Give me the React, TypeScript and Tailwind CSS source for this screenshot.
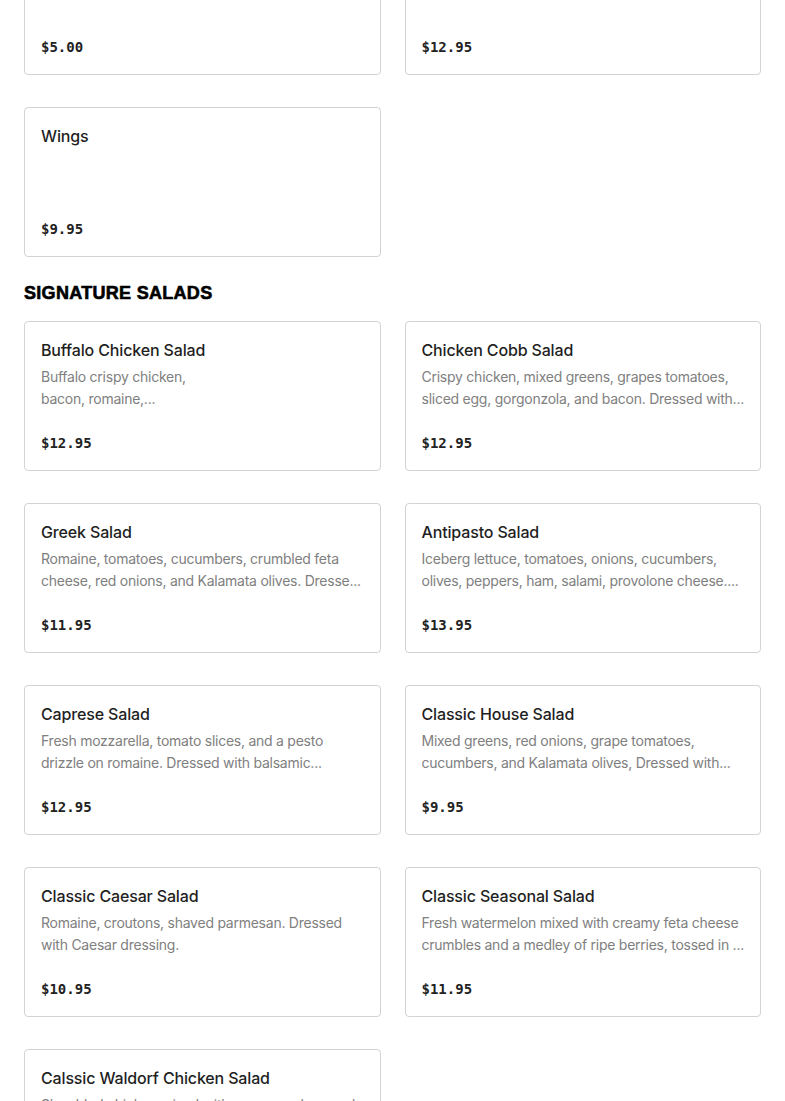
import React from "react";

type Item = { name: string; lines: string[]; price: string };

const Card = ({ item }: { item: Item }) => (
  <div className="h-[150px] rounded border border-[#d3d3d3] bg-white p-4 flex flex-col">
    <div className="text-[16px] leading-6 font-medium text-[#1f1f1f] [font-family:Inter,'Noto_Sans',sans-serif] tracking-[-0.15px]">
      {item.name}
    </div>
    <div className="mt-1 text-[14px] leading-[22px] text-[#808080] [font-family:Inter,'Noto_Sans',sans-serif] tracking-[-0.25px]">
      {item.lines.map((l, i) => (
        <div key={i} className="whitespace-nowrap overflow-hidden">
          {l}
        </div>
      ))}
    </div>
    <div className="mt-auto text-[14px] leading-[22px] font-bold text-[#222] [font-family:'DejaVu_Sans_Mono',monospace]">
      {item.price}
    </div>
  </div>
);

const top: (Item | null)[] = [
  { name: "Garlic Knots", lines: [], price: "$5.00" },
  { name: "Mozzarella Sticks", lines: [], price: "$12.95" },
  { name: "Wings", lines: [], price: "$9.95" },
  null,
];

const salads: Item[] = [
  { name: "Buffalo Chicken Salad", lines: ["Buffalo crispy chicken,", "bacon, romaine,..."], price: "$12.95" },
  { name: "Chicken Cobb Salad", lines: ["Crispy chicken, mixed greens, grapes tomatoes,", "sliced egg, gorgonzola, and bacon. Dressed with..."], price: "$12.95" },
  { name: "Greek Salad", lines: ["Romaine, tomatoes, cucumbers, crumbled feta", "cheese, red onions, and Kalamata olives. Dresse..."], price: "$11.95" },
  { name: "Antipasto Salad", lines: ["Iceberg lettuce, tomatoes, onions, cucumbers,", "olives, peppers, ham, salami, provolone cheese...."], price: "$13.95" },
  { name: "Caprese Salad", lines: ["Fresh mozzarella, tomato slices, and a pesto", "drizzle on romaine. Dressed with balsamic..."], price: "$12.95" },
  { name: "Classic House Salad", lines: ["Mixed greens, red onions, grape tomatoes,", "cucumbers, and Kalamata olives, Dressed with..."], price: "$9.95" },
  { name: "Classic Caesar Salad", lines: ["Romaine, croutons, shaved parmesan. Dressed", "with Caesar dressing."], price: "$10.95" },
  { name: "Classic Seasonal Salad", lines: ["Fresh watermelon mixed with creamy feta cheese", "crumbles and a medley of ripe berries, tossed in ..."], price: "$11.95" },
  { name: "Calssic Waldorf Chicken Salad", lines: ["Shredded chicken mixed with grapes, celery, and", "walnuts in a creamy dressing..."], price: "$12.95" },
];

export default function App() {
  return (
    <div className="bg-white min-h-screen overflow-hidden">
      <div className="-mt-[75px] px-6 pb-10">
        <div className="grid grid-cols-2 gap-x-6 gap-y-8">
          {top.map((it, i) => (it ? <Card key={i} item={it} /> : <div key={i} />))}
        </div>
        <h2 className="mt-6 mb-4 text-[18px] leading-6 font-bold uppercase text-black tracking-[0.3px] [font-family:'Liberation_Sans',Arial,sans-serif] [-webkit-text-stroke:0.6px_black]">
          Signature Salads
        </h2>
        <div className="grid grid-cols-2 gap-x-6 gap-y-8">
          {salads.map((it, i) => (
            <Card key={i} item={it} />
          ))}
        </div>
      </div>
    </div>
  );
}
